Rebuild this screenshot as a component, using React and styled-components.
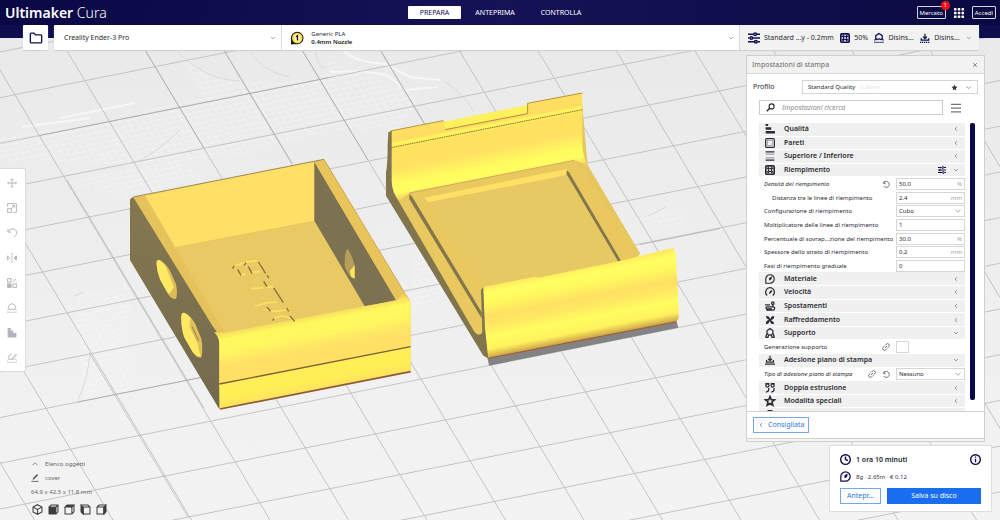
import React from "react";
import styled, { createGlobalStyle, css } from "styled-components";

const NAVY = "#0f0e4f";
const BLUE = "#196ef0";

const GlobalStyle = createGlobalStyle`
  *, *::before, *::after { box-sizing: border-box; }
  body {
    margin: 0;
    background: #eeeeee;
    color: #2b2b33;
    font: 7px/10px "Noto Sans", "Open Sans", sans-serif;
  }
  button, input, select {
    margin: 0;
    padding: 0;
    border: 0;
    border-radius: 0;
    background: none;
    color: inherit;
    font: inherit;
    letter-spacing: inherit;
  }
  button { cursor: pointer; }
  select { appearance: none; cursor: pointer; }
  svg { display: block; flex: none; }
`;

/* ---------- icons ---------- */

const ICONS = {
  folder: <path d="M1.500 3.500q0-1 1-1h3.200l1.800 2h6q1 0 1 1v7q0 1-1 1h-11q-1 0-1-1z" />,
  down: <path d="M3 5.500l5 5 5-5" />,
  up: <path d="M3 10.500l5-5 5 5" />,
  left: <path d="M10.500 3l-5 5 5 5" />,
  close: <path d="M3 3l10 10M13 3L3 13" />,
  sliders: (
    <g>
      <path d="M0 3h7M12 3h4M0 8h2M7 8h9M0 13h8M13 13h3" />
      <circle cx="9.500" cy="3" r="1.800" />
      <circle cx="4.500" cy="8" r="1.800" />
      <circle cx="10.500" cy="13" r="1.800" />
    </g>
  ),
  infill: (
    <g>
      <rect x="1" y="1" width="14" height="14" rx="2" fill="currentColor" />
      <g fill="#fff" stroke="none">
        <path d="M8 6L10 8 8 10 6 8z" />
        <path d="M5 2.600h6L8 5.200zM5 13.400h6L8 10.800zM2.600 5v6L5.200 8zM13.400 5v6L10.800 8z" />
        <circle cx="3.400" cy="3.400" r=".9" />
        <circle cx="12.600" cy="3.400" r=".9" />
        <circle cx="3.400" cy="12.600" r=".9" />
        <circle cx="12.600" cy="12.600" r=".9" />
      </g>
    </g>
  ),
  support: (
    <g>
      <path d="M5 11L2.800 8V4.200L8 .8l5.200 3.400V8L11 11" />
      <path d="M5 11Q8 8 11 11M3 9L.8 12M13 9l2.200 3" />
      <path d="M.5 14.800h15" strokeDasharray="2 1.200" />
    </g>
  ),
  supportSolid: (
    <g>
      <path d="M5.500 11L3 8l.5-4L8 1l4.500 3 .5 4-2.500 3" />
      <path d="M.5 14.800h4.200Q5 11 8 11t3.300 3.800h4.200M3 9.500L1 14.500M13 9.500l2 5" />
    </g>
  ),
  adhesion: (
    <g>
      <path d="M8 1v7.500M4.800 5.800L8 9l3.200-3.200" />
      <path d="M2 8.500v3h12v-3" />
      <path d="M0 14.800h16" strokeDasharray="2 1.200" />
    </g>
  ),
  adhesionSolid: (
    <g>
      <path d="M8 1v8M4.800 6L8 9l3.200-3" />
      <path d="M2.500 8v3.500h11V8M0 14.700h16" />
    </g>
  ),
  apps: (
    <g fill="currentColor" stroke="none">
      {[0, 6, 12].map((y) =>
        [0, 6, 12].map((x) => <rect key={`${x}-${y}`} x={x} y={y} width="4" height="4" rx="1" />)
      )}
    </g>
  ),
  search: (
    <g>
      <circle cx="10" cy="6" r="4.500" />
      <path d="M6.500 9.500L1.500 14.500" strokeWidth="2.600" />
    </g>
  ),
  menu: <path d="M0 2h16M0 8h16M0 14h16" />,
  star: <path fill="currentColor" d="M8 1.500l2 4.400 4.800.5-3.600 3.200 1 4.800L8 12l-4.200 2.400 1-4.800L1.200 6.400l4.800-.5z" />,
  starOutline: <path d="M8 1l2 4.800 5.200.4-4 3.400 1.300 5.100L8 12l-4.500 2.700 1.300-5.100-4-3.400L6 5.800z" strokeWidth="2.600" />,
  quality: <path fill="currentColor" stroke="none" d="M1 0h4v3H1zM1 5h9v4H1zM1 11h15v4H1z" />,
  walls: (
    <g>
      <rect x="1" y="1" width="14" height="14" rx="2" />
      <rect x="4" y="4" width="8" height="8" strokeWidth="1" opacity=".55" />
    </g>
  ),
  topBottom: (
    <g>
      <path d="M1 1.500h14M1 14.500h14" />
      <path d="M1 5h14M1 11h14" opacity=".4" />
    </g>
  ),
  material: (
    <g>
      <path d="M1.200 14.800V8A6.800 6.800 0 1 1 8 14.800z" strokeWidth="1.800" />
      <path d="M10.500 4.500L7 6.500v3.200l2.800-1z" fill="currentColor" strokeWidth="1" />
    </g>
  ),
  speed: (
    <g>
      <path d="M3.500 13.500a7 7 0 1 1 9 0" />
      <path d="M7 10.500L11 5.500" strokeWidth="2.600" />
    </g>
  ),
  travel: (
    <g>
      <path d="M0 6h8M2 14.500h11a2.500 2.500 0 0 0 0-5H3a1.500 1.500 0 0 0 0 3h8" />
      <circle cx="12.500" cy="3.500" r="2" />
      <path d="M12.500 5.500v4" />
    </g>
  ),
  fan: (
    <g fill="currentColor" stroke="none">
      <path d="M7 7Q2 7 1.500 1.500 7 1 8 6zM9 7q0-5.500 5.500-5.500Q15 7 10 8zM9 9q5 0 5.500 5.500Q9 15 8 10zM7 9q0 5.500-5.500 5.500Q1 9 6 8z" />
      <circle cx="8" cy="8" r="2.400" />
    </g>
  ),
  dual: (
    <g>
      <circle cx="3.800" cy="4" r="2.500" />
      <circle cx="12.200" cy="4" r="2.500" />
      <path d="M.5 1h6.500M9 1h6.500M6 8v2.500q0 3.500-4.500 4M14.500 8v2.500q0 3.500-4.500 4" />
    </g>
  ),
  experimental: <path fill="currentColor" d="M5 1h6v6l4 8H1l4-8z" />,
  reset: (
    <g>
      <path d="M3 6.500A6 6 0 1 1 3.500 12" />
      <path d="M6.500 2L2.500 6.200l5 1.800" />
    </g>
  ),
  link: (
    <g transform="rotate(-45 8 8)">
      <path d="M7 11.500H3.500a3.500 3.500 0 0 1 0-7H7M9 4.500h3.500a3.500 3.500 0 0 1 0 7H9M5 8h6" />
    </g>
  ),
  clock: (
    <g>
      <circle cx="8" cy="8" r="7" />
      <path d="M8 3.500V8l3.500 1.500" />
    </g>
  ),
  info: (
    <g>
      <circle cx="8" cy="8" r="7" />
      <path d="M8 7v5M8 3.800v1.600" />
    </g>
  ),
  pencil: (
    <g>
      <path d="M4 11l1-3 7-7 1.500 1.500-7 7z" fill="currentColor" strokeWidth="1" />
      <path d="M1 14.800h14" />
    </g>
  ),
  move: <path d="M8 1v14M1 8h14M6 3l2-2 2 2M6 13l2 2 2-2M3 6L1 8l2 2M13 6l2 2-2 2" />,
  scale: (
    <g>
      <path d="M1 6V1h14v14h-5" />
      <rect x="1" y="9" width="6" height="6" />
      <path d="M8 8l4-4M8.500 4H12v3.500" />
    </g>
  ),
  rotate: (
    <g>
      <path d="M3 5.500A6.500 6.500 0 1 1 11 14" />
      <path d="M1.500 1.500v5h5" />
    </g>
  ),
  mirror: (
    <g>
      <path d="M8 0v16" strokeDasharray="4 1" />
      <path d="M1 4.500v7L4.500 8z" />
      <path d="M15 4.500v7L11.500 8z" fill="currentColor" />
    </g>
  ),
  mesh: (
    <g>
      <rect x="1" y="1" width="5.500" height="5.500" />
      <rect x="1" y="9.500" width="5.500" height="5.500" fill="currentColor" />
      <rect x="9.500" y="9.500" width="5.500" height="5.500" />
      <path d="M9.500 6.500l5-5M9.500 2h1M14 6.500h1" />
    </g>
  ),
  blocker: <path fill="currentColor" stroke="none" d="M1 0h5v4h4v4h5v7H1z" />,
  paint: (
    <g>
      <path d="M5 11L2.800 8V4.500L8 1.500M8 9l6-7 1.500 1.500-6.500 6z" />
      <path d="M5 11Q8 8.500 11 11M3 9L.8 12M13 9l2.200 3" />
      <path d="M.5 14.800h15" strokeDasharray="2 1.200" />
    </g>
  ),
  cube: <path d="M8 1l6.500 3.500v7L8 15l-6.500-3.500v-7zM1.500 4.500L8 8l6.500-3.500M8 8v7" />,
  cubeFront: (
    <g>
      <path d="M1.500 4.500l3-3h10v10l-3 3M11.500 4.500l3-3" />
      <rect x="1.500" y="4.500" width="10" height="10" fill="currentColor" />
    </g>
  ),
  cubeTop: (
    <g>
      <path d="M1.500 4.500l3-3h10l-3 3z" fill="currentColor" />
      <path d="M1.500 4.500v10h10v-10M11.500 14.500l3-3v-10" />
    </g>
  ),
  cubeLeft: (
    <g>
      <path d="M1.500 1.500l3 3v10l-3-3z" fill="currentColor" />
      <path d="M4.500 4.500h10v10h-10zM1.500 1.500h10l3 3" />
    </g>
  ),
  cubeRight: (
    <g>
      <path d="M11.500 4.500l3-3v10l-3 3z" fill="currentColor" />
      <path d="M1.500 4.500h10v10h-10zM1.500 4.500l3-3h10" />
    </g>
  ),
};

const IconSvg = styled.svg`
  width: ${(p) => p.$size}px;
  height: ${(p) => p.$size}px;
  color: ${(p) => p.$color || "inherit"};
  fill: none;
  stroke: currentColor;
  stroke-width: ${(p) => p.$stroke};
  overflow: visible;
`;

const Icon = ({ name, size = 10, color, stroke = 2 }) => (
  <IconSvg viewBox="0 0 16 16" $size={size} $color={color} $stroke={stroke} aria-hidden="true">
    {ICONS[name]}
  </IconSvg>
);

/* ---------- 3D scene ---------- */

const SceneSvg = styled.svg`
  position: absolute;
  inset: 0;
  width: 100%;
  height: 100%;
`;

const steep = Array.from({ length: 18 }, (_, i) => -326 + i * 78.5);
const shallow = Array.from({ length: 16 }, (_, i) => 52 + i * 45.7);

const Scene = () => (
  <SceneSvg viewBox="0 0 1000 520" preserveAspectRatio="xMidYMin slice" role="img" aria-label="Piano di stampa">
    <defs>
      <linearGradient id="plate" x1="0" y1="0" x2="0" y2="1">
        <stop offset="0" stopColor="#e9e9e9" />
        <stop offset="1" stopColor="#f3f3f3" />
      </linearGradient>
      <pattern id="mesh" width="7" height="5" patternUnits="userSpaceOnUse" patternTransform="matrix(1 -.2 .6 1 0 0)">
        <path d="M0 0H7M0 0V5" stroke="#fff" strokeWidth="1" opacity=".5" />
      </pattern>
      <linearGradient id="boxFront" gradientUnits="userSpaceOnUse" x1="560" y1="490" x2="589" y2="640">
        <stop offset="0" stopColor="#f2d05c" />
        <stop offset=".2" stopColor="#fff95e" />
        <stop offset=".42" stopColor="#fff760" />
        <stop offset=".7" stopColor="#ffe365" />
        <stop offset="1" stopColor="#ffdf64" />
      </linearGradient>
      <linearGradient id="boxLower" gradientUnits="userSpaceOnUse" x1="580" y1="650" x2="594" y2="722">
        <stop offset="0" stopColor="#ffee58" />
        <stop offset=".5" stopColor="#fff054" />
        <stop offset="1" stopColor="#ffe060" />
      </linearGradient>
      <linearGradient id="boxSide" x1="0" y1="0" x2="0" y2="1">
        <stop offset="0" stopColor="#857850" />
        <stop offset="1" stopColor="#736a4e" />
      </linearGradient>
      <linearGradient id="lidBack" gradientUnits="userSpaceOnUse" x1="310" y1="85" x2="350" y2="292">
        <stop offset="0" stopColor="#ffe060" />
        <stop offset=".16" stopColor="#ffdc62" />
        <stop offset=".2" stopColor="#fff65c" />
        <stop offset=".28" stopColor="#ffe160" />
        <stop offset=".55" stopColor="#ffe263" />
        <stop offset=".76" stopColor="#fffb5e" />
        <stop offset=".88" stopColor="#ffff62" />
        <stop offset="1" stopColor="#f2d260" />
      </linearGradient>
      <linearGradient id="lidFront" gradientUnits="userSpaceOnUse" x1="600" y1="550" x2="642" y2="765">
        <stop offset="0" stopColor="#ffe95e" />
        <stop offset=".1" stopColor="#ffff62" />
        <stop offset=".24" stopColor="#fff95e" />
        <stop offset=".42" stopColor="#ffe063" />
        <stop offset=".55" stopColor="#ffe962" />
        <stop offset=".7" stopColor="#fffd60" />
        <stop offset=".86" stopColor="#fff25e" />
        <stop offset=".96" stopColor="#d5b04b" />
        <stop offset="1" stopColor="#8d7440" />
      </linearGradient>
    </defs>

    <rect width="1000" height="520" fill="url(#plate)" />

    <g fill="url(#mesh)">
      <path d="M178 52Q205 80 245 82L318 79 330 60 420 95 400 130 330 130 240 155 140 165 0 160V135L110 122 200 95z" />
      <path d="M68 182L180 160 200 175 130 200z" />
      <path d="M75 300L130 282V390L85 395z" />
      <path d="M415 235L470 240 440 300 410 320z" />
      <path d="M640 215L690 205 685 225 650 235z" />
    </g>
    <g fill="none" stroke="#dadada">
      <path d="M178 52Q205 80 240 81M251 52Q262 72 290 77M316 52Q316 65 326 69M180 130Q160 150 135 163M444 81Q465 95 474 112M90 352Q88 380 78 400M75 296l8-4M648 216l18-9" />
    </g>
    <g fill="none" stroke="#f6f6f6" strokeWidth="2">
      <path d="M344 51Q355 62 385 64L410 77 440 80M330 72Q375 70 390 77L405 90 438 87M22 127L90 118M60 118L135 103" />
    </g>

    <g fill="none" stroke="#c4c4c4">
      {steep.map((x) => (
        <path key={x} d={`M${x - 30} 0L${x + 282} 520`} />
      ))}
      {shallow.map((y) => (
        <path key={y} d={`M0 ${y}L1000 ${y - 200}`} />
      ))}
    </g>
    <g fill="none" stroke="#8c8c8c" opacity=".4">
      <path d="M67 180L204 408M145 50L204 148M224 50L292 163M302 50L368 160M380 50L425 125M90 354L188 517M40 135.400L330 77.400M78 402L204 376.900M640 244.600L720 228.600" />
    </g>

    {/* open box */}
    <g transform="translate(120 150) scale(.3333)">
      <path d="M30 150Q32 142 40 142L612 28 855 430Q872 445 872 470V665L300 778 30 330z" fill="#e7c660" />
      <path d="M75 137L583 35V212L165 292z" fill="#ffe066" />
      <path d="M165 292L583 212 735 472 318 556z" fill="#e8c963" />
      <path d="M40 142L75 137 165 292 318 556 285 545z" fill="#e5c25b" />
      <path d="M583 35L828 450 735 470 583 212z" fill="#7c7150" />
      <path d="M583 35L612 28 855 432 828 450z" fill="#e9c45a" />
      <path d="M674 348Q673 305 683 296 697 318 704 346V386L693 380Q680 368 674 348z" fill="#b79e5a" />
      <path d="M690 362L704 346V386L693 380z" fill="#ffe75c" />
      <path d="M30 150Q32 142 40 142L280 532Q298 552 298 580V778L30 330z" fill="url(#boxSide)" />
      <path d="M282 546L318 548 735 468 828 452 850 432Q872 445 872 470V590L298 702V580Q296 558 282 546z" fill="url(#boxFront)" />
      <path d="M298 702L872 590V665L300 778z" fill="url(#boxLower)" />
      <path d="M298 702L872 590" fill="none" stroke="#7d6236" strokeWidth="4" />
      <path d="M300 777L872 665" fill="none" stroke="#8d5b35" strokeWidth="5" />
      <path d="M40 141L612 28" fill="none" stroke="#a08a4d" strokeWidth="3" />
      <path d="M612 28L855 430" fill="none" stroke="#b99a4c" strokeWidth="2" />
      <g>
        <path d="M110 345Q108 326 120 331 138 341 150 362L168 402Q174 430 168 446 156 450 144 432L120 388Q112 368 110 345z" fill="#dcbc58" />
        <path d="M110 345Q108 326 120 331 130 337 138 350L150 382 162 412 150 430Q146 434 140 424L120 388Q112 368 110 345z" fill="#ffe962" />
        <path d="M184 508Q182 486 194 489 212 496 226 522L244 566Q250 600 244 622 232 626 218 606L194 564Q184 540 184 508z" fill="#dfbf59" />
        <path d="M184 508Q182 486 194 489 206 494 212 506L208 528 232 580 242 620Q230 622 218 606L194 564Q184 540 184 508z" fill="#ffe962" />
        <path d="M216 530L236 572" stroke="#8c7a4c" strokeWidth="3" fill="none" />
      </g>
      <g fill="none">
        <path
          d="M348 346L375 338M378 336L412 332M355 376L377 372M392 368L420 364M394 416L430 413M438 412L460 410M405 468L445 458 474 456M436 478L456 484 505 480M462 506Q486 490 515 506"
          stroke="#ffe067"
          strokeWidth="5"
        />
        <path
          d="M338 356L342 348M353 358L363 376M385 350L396 370M372 346L378 338M415 336L437 370M441 376L447 384M431 394L441 410M461 414L490 458M441 472L452 484M500 474L506 484M510 498L524 514M458 512L462 506"
          stroke="#86703f"
          strokeWidth="4"
        />
      </g>
    </g>

    {/* sliding lid */}
    <g transform="translate(375 85) scale(.3333)">
      <path d="M338 818L905 708 910 728 342 842z" fill="#838384" />
      <path d="M45 138L622 60 638 240 795 505 735 600 340 800 300 760 60 360z" fill="#e7c65f" />
      <path d="M48 138L205 107 212 110 458 62V55L622 24V180Q624 215 638 242L598 226 105 322V345L75 350Q52 320 50 290z" fill="url(#lidBack)" />
      <path d="M208 110L458 60V84L208 134z" fill="#fff15c" />
      <path d="M210 134L458 86V55" fill="none" stroke="#b08e3e" strokeWidth="3" />
      <path d="M48 188L622 74" fill="none" stroke="#8b753b" strokeWidth="3" strokeDasharray="5 2" />
      <path d="M46 138L205 107M458 55L622 24" fill="none" stroke="#b89240" strokeWidth="3" />
      <path d="M103 324L598 226 795 505 735 530 325 606V745Q312 758 298 740L72 348z" fill="#e9c860" />
      <path d="M148 338L575 252 578 270 160 352z" fill="#ffe064" />
      <path d="M160 352L578 270 735 530 325 606z" fill="#e7c963" />
      <path d="M103 326L112 336 320 682V700L103 342z" fill="#83764b" />
      <path d="M575 256L582 262 737 526 730 530 575 268z" fill="#83764b" />
      <path d="M103 324L598 226" fill="none" stroke="#c5a24e" strokeWidth="2" />
      <path d="M40 142L50 138V290Q52 325 72 350L298 740Q312 758 322 742L318 615 326 604 330 700 340 820 325 812 33 332V262Q38 240 38 180z" fill="#80754d" />
      <path d="M325 606L480 575 490 578 735 528 895 488Q903 500 903 515L912 690Q912 704 902 710L340 820 330 730z" fill="url(#lidFront)" />
      <path d="M340 820L902 711" fill="none" stroke="#a3563a" strokeWidth="3" />
    </g>
  </SceneSvg>
);

/* ---------- page frame ---------- */

const Page = styled.div`
  position: relative;
  display: flex;
  flex-direction: column;
  min-height: 100vh;
  overflow: hidden;
`;

const Header = styled.header`
  position: relative;
  display: grid;
  grid-template-columns: 1fr auto 1fr;
  align-items: center;
  height: 25px;
  padding: 0 4px 0 5px;
  background: linear-gradient(100deg, #090845, #151356 50%, #0a0a42);
  color: #fff;
`;

const Logo = styled.h1`
  margin: 0;
  font-size: 14px;
  line-height: 20px;
  font-weight: 600;
`;

const LogoLight = styled.span`
  font-weight: 300;
`;

const Tabs = styled.nav`
  display: flex;
  gap: 2px;
`;

const Tab = styled.button`
  height: 13px;
  padding: 0 12px;
  border-radius: 1px;
  ${(p) =>
    p.$active &&
    css`
      background: #fff;
      color: ${NAVY};
    `}
`;

const HeaderActions = styled.div`
  display: flex;
  align-items: center;
  justify-content: flex-end;
  gap: 8px;
`;

const OutlineButton = styled.button`
  position: relative;
  height: 13px;
  padding: 0 2px;
  border: 1px solid #d5d5e6;
  border-radius: 1px;
  font-size: 6px;
  line-height: 10px;
`;

const Badge = styled.span`
  position: absolute;
  top: -6px;
  right: -5px;
  width: 9px;
  height: 9px;
  border-radius: 50%;
  background: #f01018;
  font-size: 6px;
  line-height: 9px;
  text-align: center;
`;

const ConfigRow = styled.div`
  position: relative;
  display: flex;
  gap: 6px;
  height: 25px;
  padding: 0 21px 0 23px;
  background: linear-gradient(${NAVY}, ${NAVY}) top / 100% 13px no-repeat;
`;

const FolderButton = styled.button`
  display: grid;
  place-items: center;
  width: 25px;
  background: #fff;
  border-radius: 1px;
  box-shadow: 0 1px 1px #cfcfcf;
`;

const ConfigBar = styled.div`
  flex: 1;
  display: grid;
  grid-template-columns: 1fr 2fr 240px;
  background: #fff;
  border-radius: 1px;
  box-shadow: 0 1px 1px #cfcfcf;
`;

const PrinterField = styled.label`
  display: flex;
  align-items: center;
  padding: 0 5px 0 10px;
  border-right: 1px solid #d8d8d8;
`;

const PlainSelect = styled.select`
  flex: ${(p) => (p.$width ? "none" : 1)};
  width: ${(p) => (p.$width ? `${p.$width}px` : "auto")};
  min-width: 0;
  height: 10px;
`;

const MaterialButton = styled.button`
  display: flex;
  align-items: center;
  gap: 7px;
  padding: 0 5px 0 8px;
  font-size: 6px;
  line-height: 8px;
  text-align: left;
`;

const MaterialText = styled.span`
  flex: 1;
  display: grid;
`;

const Strong = styled.strong`
  color: #191919;
  font-weight: 600;
`;

const SettingsSummary = styled.button`
  display: flex;
  align-items: center;
  justify-content: space-between;
  padding: 0 7px 0 8px;
  background: #f2f2f2;
  border-left: 1px solid #d8d8d8;
`;

const SummaryItem = styled.span`
  display: flex;
  align-items: center;
  gap: 4px;
  white-space: nowrap;
`;

const Main = styled.main`
  position: relative;
  flex: 1;
  display: flex;
  justify-content: space-between;
`;

const LeftColumn = styled.div`
  display: flex;
  flex-direction: column;
  align-items: flex-start;
  justify-content: space-between;
  padding: 119px 0 4px;
`;

const Toolbar = styled.div`
  display: grid;
  grid-auto-rows: 25px;
  width: 25px;
  padding: 1px 2px 1px 0;
  background: #fff;
  border-radius: 0 2px 2px 0;
  box-shadow: 0 0 1px 1px #dcdcdc;
  color: #b4b4bc;
`;

const ToolButton = styled.button`
  display: grid;
  place-items: center;
`;

const Objects = styled.section`
  display: grid;
  gap: 4px;
  padding-left: 31px;
  color: #666;
  font-size: 6px;
`;

const ObjectLine = styled.button`
  display: flex;
  align-items: center;
  gap: 6px;
  text-align: left;
`;

const Dimensions = styled.p`
  margin: 0;
`;

const Views = styled.div`
  display: flex;
  gap: 5px;
  padding: 3px 1px 1px;
  color: #3c3c3c;
`;

const RightColumn = styled.div`
  display: flex;
  flex-direction: column;
  align-items: flex-end;
  gap: 3px;
  padding: 5px 8px 8px 0;
`;

/* ---------- print settings panel ---------- */

const Panel = styled.section`
  width: 239px;
  margin-right: 7px;
  background: #fff;
  border: 1px solid #cfcfcf;
`;

const PanelHeader = styled.header`
  display: flex;
  align-items: center;
  justify-content: space-between;
  height: 18px;
  padding: 0 6px 0 5px;
  background: #f2f2f2;
  border-bottom: 1px solid #d6d6d6;
  color: #6a6a6a;
`;

const PanelTitle = styled.h2`
  margin: 0;
  font: inherit;
`;

const IconButton = styled.button`
  display: grid;
  place-items: center;
`;

const ProfileRow = styled.div`
  display: flex;
  align-items: center;
  justify-content: space-between;
  padding: 6px;
`;

const ProfileBox = styled.div`
  display: flex;
  align-items: center;
  width: 176px;
  height: 14px;
  padding: 0 5px;
  border: 1px solid #d4d4d4;
  font-size: 6px;
`;

const Faint = styled.span`
  flex: 1;
  color: #e4e4e4;
`;

const IconPair = styled.span`
  display: flex;
  align-items: center;
  gap: 7px;
`;

const SearchRow = styled.div`
  display: flex;
  align-items: center;
  gap: 8px;
  padding: 0 12px 8px;
`;

const SearchBox = styled.label`
  display: flex;
  align-items: center;
  gap: 7px;
  width: 184px;
  height: 15px;
  padding: 0 6px;
  border: 1px solid #cccccc;
`;

const SearchInput = styled.input`
  flex: 1;
  min-width: 0;
  outline: 0;
  font-style: italic;
  &::placeholder { color: #8a8a8a; opacity: 1; }
`;

const ListArea = styled.div`
  display: flex;
  gap: 5px;
  height: 288px;
  padding: 0 9px 0 12px;
  overflow: hidden;
`;

const SettingsList = styled.div`
  flex: 1;
  display: grid;
  grid-template-columns: minmax(0, 1fr);
  grid-template-rows: repeat(22, 1fr);
  min-width: 0;
  height: 299px;
`;

const ScrollThumb = styled.div`
  flex: none;
  width: 5px;
  height: 277px;
  border-radius: 2px;
  background: #08084f;
`;

const CategoryButton = styled.button`
  display: flex;
  align-items: center;
  gap: 9px;
  margin-bottom: 1px;
  padding: 0 6px;
  background: #f0f0f0;
  text-align: left;
`;

const CategoryName = styled.span`
  flex: 1;
  font-weight: 600;
`;

const SettingRow = styled.div`
  display: flex;
  align-items: center;
  gap: 2px;
  padding-left: ${(p) => (p.$indent ? 13 : 5)}px;
  font-size: 6px;
`;

const SettingLabel = styled.label`
  flex: 1;
  white-space: nowrap;
  font-style: ${(p) => (p.$changed ? "italic" : "normal")};
`;

const SettingIcons = styled.span`
  display: flex;
  gap: 6px;
  padding-right: 4px;
`;

const Field = styled.span`
  display: flex;
  flex: none;
  align-items: center;
  width: 69px;
  height: 12px;
  padding: 0 2px;
  background: #fff;
  border: 1px solid #d6d6d6;
`;

const FieldInput = styled.input`
  flex: 1;
  min-width: 0;
  height: 10px;
  outline: 0;
`;

const Unit = styled.span`
  color: #a3a3a3;
`;

const CheckSlot = styled.span`
  display: flex;
  flex: none;
  width: 69px;
`;

const Checkbox = styled.input`
  appearance: none;
  width: 13px;
  height: 12px;
  border: 1px solid #d6d6d6;
  background: #fff;
`;

const PanelFooter = styled.footer`
  padding: 5px 6px;
  border-top: 1px solid #d0d0d0;
`;

const PanelGrip = styled.div`
  height: 3px;
  border-top: 1px solid #d0d0d0;
  background: #f5f5f5;
`;

const ActionButton = styled.button`
  display: flex;
  align-items: center;
  justify-content: center;
  gap: 4px;
  height: 16px;
  padding: 0 4px;
  border: 1px solid ${(p) => (p.$primary ? BLUE : "#74a7ee")};
  background: ${(p) => (p.$primary ? BLUE : "#fff")};
  color: ${(p) => (p.$primary ? "#fff" : "#2f76dd")};
`;

/* ---------- job card ---------- */

const JobCard = styled.section`
  display: grid;
  gap: 6px;
  width: 163px;
  padding: 8px 10px 7px;
  background: #fff;
  border: 1px solid #dedede;
`;

const JobLine = styled.div`
  display: flex;
  align-items: center;
  gap: 5px;
  height: 11px;
  color: ${NAVY};
`;

const JobTime = styled.span`
  flex: 1;
  color: #222230;
  font-weight: 600;
`;

const JobMaterial = styled.span`
  color: #33333c;
  font-size: 6px;
`;

const JobButtons = styled.div`
  display: grid;
  grid-template-columns: 41px 1fr;
  gap: 6px;
`;

/* ---------- composed parts ---------- */

const Category = ({ icon, children, label, open, extra }) => (
  <CategoryButton aria-expanded={!!open} aria-label={label}>
    <Icon name={icon} />
    <CategoryName>{children}</CategoryName>
    <IconPair>
      {extra && <Icon name="sliders" size={8} color={NAVY} />}
      <Icon name={open ? "down" : "left"} size={6} color="#777" />
    </IconPair>
  </CategoryButton>
);

const Setting = ({ id, label, value, unit, options, checkbox, changed, indent, icons }) => (
  <SettingRow $indent={indent}>
    <SettingLabel htmlFor={id} $changed={changed}>
      {label}
    </SettingLabel>
    {icons && (
      <SettingIcons>
        {icons.map((name) => (
          <IconButton key={name} aria-label={name === "link" ? "Collegato" : "Ripristina"}>
            <Icon name={name} size={8} color="#666" stroke={1.8} />
          </IconButton>
        ))}
      </SettingIcons>
    )}
    {checkbox && (
      <CheckSlot>
        <Checkbox id={id} type="checkbox" />
      </CheckSlot>
    )}
    {options && (
      <Field>
        <PlainSelect id={id} defaultValue={options[0]}>
          {options.map((o) => (
            <option key={o}>{o}</option>
          ))}
        </PlainSelect>
        <Icon name="down" size={8} color="#888" stroke={1.5} />
      </Field>
    )}
    {value && (
      <Field>
        <FieldInput id={id} defaultValue={value} />
        {unit && <Unit>{unit}</Unit>}
      </Field>
    )}
  </SettingRow>
);

const SpoolBadge = () => (
  <svg width="14" height="14" viewBox="0 0 28 28" aria-hidden="true">
    <path d="M2 27V14A12.500 12.500 0 1 1 14 26.500H7z" fill="#1c1c10" />
    <circle cx="14.500" cy="14" r="10.500" fill="#ffe04a" />
    <circle cx="14.500" cy="14" r="6.500" fill="#fff6c8" />
    <path d="M12 11.500l3-2v9.500" fill="none" stroke="#111" strokeWidth="2.600" />
  </svg>
);

const TOOLS = [
  ["move", "Sposta"],
  ["scale", "Scala"],
  ["rotate", "Ruota"],
  ["mirror", "Immagine speculare"],
  ["mesh", "Impostazioni per modello"],
  ["support", "Supporto"],
  ["blocker", "Blocco supporto"],
  ["paint", "Supporto personalizzato"],
];

const VIEWS = [
  ["cube", "Vista 3D"],
  ["cubeFront", "Vista frontale"],
  ["cubeTop", "Vista superiore"],
  ["cubeLeft", "Vista sinistra"],
  ["cubeRight", "Vista destra"],
];

export default function App() {
  return (
    <Page>
      <GlobalStyle />
      <Scene />

      <Header>
        <Logo>
          Ultimaker <LogoLight>Cura</LogoLight>
        </Logo>
        <Tabs>
          <Tab $active>PREPARA</Tab>
          <Tab>ANTEPRIMA</Tab>
          <Tab>CONTROLLA</Tab>
        </Tabs>
        <HeaderActions>
          <OutlineButton>
            Mercato<Badge>1</Badge>
          </OutlineButton>
          <IconButton aria-label="Applicazioni">
            <Icon name="apps" />
          </IconButton>
          <OutlineButton>Accedi</OutlineButton>
        </HeaderActions>
      </Header>

      <ConfigRow>
        <FolderButton aria-label="Apri file">
          <Icon name="folder" size={14} color={NAVY} stroke={1.5} />
        </FolderButton>
        <ConfigBar>
          <PrinterField>
            <PlainSelect aria-label="Stampante" defaultValue="Creality Ender-3 Pro">
              <option>Creality Ender-3 Pro</option>
            </PlainSelect>
            <Icon name="down" size={6} color="#888" />
          </PrinterField>
          <MaterialButton>
            <SpoolBadge />
            <MaterialText>
              <span>Generic PLA</span>
              <Strong>0.4mm Nozzle</Strong>
            </MaterialText>
            <Icon name="down" size={6} color="#888" />
          </MaterialButton>
          <SettingsSummary>
            <SummaryItem>
              <Icon name="sliders" size={12} color={NAVY} />
              Standard ...y - 0.2mm
            </SummaryItem>
            <SummaryItem>
              <Icon name="infill" color={NAVY} />
              50%
            </SummaryItem>
            <SummaryItem>
              <Icon name="support" color={NAVY} />
              Disins...
            </SummaryItem>
            <SummaryItem>
              <Icon name="adhesion" color={NAVY} />
              Disins...
            </SummaryItem>
            <Icon name="down" size={6} color="#888" />
          </SettingsSummary>
        </ConfigBar>
      </ConfigRow>

      <Main>
        <LeftColumn>
          <Toolbar>
            {TOOLS.map(([name, label]) => (
              <ToolButton key={name} aria-label={label}>
                <Icon name={name} stroke={1.5} />
              </ToolButton>
            ))}
          </Toolbar>
          <Objects>
            <ObjectLine>
              <Icon name="up" size={8} stroke={1.5} />
              Elenco oggetti
            </ObjectLine>
            <ObjectLine>
              <Icon name="pencil" size={8} color="#444" stroke={1.5} />
              cover
            </ObjectLine>
            <Dimensions>64.9 x 42.5 x 11.8 mm</Dimensions>
            <Views>
              {VIEWS.map(([name, label]) => (
                <IconButton key={name} aria-label={label}>
                  <Icon name={name} size={11} stroke={1.5} />
                </IconButton>
              ))}
            </Views>
          </Objects>
        </LeftColumn>

        <RightColumn>
          <Panel>
            <PanelHeader>
              <PanelTitle>Impostazioni di stampa</PanelTitle>
              <IconButton aria-label="Chiudi">
                <Icon name="close" size={6} />
              </IconButton>
            </PanelHeader>
            <ProfileRow>
              <label htmlFor="profile">Profilo</label>
              <ProfileBox>
                <PlainSelect id="profile" $width={52} defaultValue="Standard Quality">
                  <option>Standard Quality</option>
                </PlainSelect>
                <Faint>0.2mm</Faint>
                <IconPair>
                  <Icon name="star" size={7} color="#333" stroke={0} />
                  <Icon name="down" size={7} color="#888" />
                </IconPair>
              </ProfileBox>
            </ProfileRow>
            <SearchRow>
              <SearchBox>
                <Icon name="search" size={9} />
                <SearchInput placeholder="Impostazioni ricerca" aria-label="Impostazioni ricerca" />
              </SearchBox>
              <IconButton aria-label="Visibilità impostazioni">
                <Icon name="menu" color="#777" />
              </IconButton>
            </SearchRow>
            <ListArea>
              <SettingsList>
                <Category icon="quality">Qualità</Category>
                <Category icon="walls">Pareti</Category>
                <Category icon="topBottom">Superiore / Inferiore</Category>
                <Category icon="infill" open extra>
                  Riempimento
                </Category>
                <Setting id="density" label="Densità del riempimento" value="50.0" unit="%" changed icons={["reset"]} />
                <Setting id="distance" label="Distanza tra le linee di riempimento" value="2.4" unit="mm" indent />
                <Setting id="pattern" label="Configurazione di riempimento" options={["Cubo", "Griglia", "Linee"]} />
                <Setting id="multiplier" label="Moltiplicatore delle linee di riempimento" value="1" />
                <Setting id="overlap" label="Percentuale di sovrap...zione del riempimento" value="30.0" unit="%" />
                <Setting id="thickness" label="Spessore dello strato di riempimento" value="0.2" unit="mm" />
                <Setting id="steps" label="Fasi di riempimento graduale" value="0" />
                <Category icon="material">Materiale</Category>
                <Category icon="speed">Velocità</Category>
                <Category icon="travel">Spostamenti</Category>
                <Category icon="fan">Raffreddamento</Category>
                <Category icon="supportSolid" open>
                  Supporto
                </Category>
                <Setting id="support" label="Generazione supporto" checkbox icons={["link"]} />
                <Category icon="adhesionSolid" open>
                  Adesione piano di stampa
                </Category>
                <Setting
                  id="adhesion"
                  label="Tipo di adesione piano di stampa"
                  options={["Nessuno", "Skirt", "Brim", "Raft"]}
                  changed
                  icons={["link", "reset"]}
                />
                <Category icon="dual">Doppia estrusione</Category>
                <Category icon="starOutline">Modalità speciali</Category>
                <Category icon="experimental" label="Sperimentale" />
              </SettingsList>
              <ScrollThumb />
            </ListArea>
            <PanelFooter>
              <ActionButton>
                <Icon name="left" size={6} />
                Consigliata
              </ActionButton>
            </PanelFooter>
            <PanelGrip />
          </Panel>

          <JobCard>
            <JobLine>
              <Icon name="clock" size={11} />
              <JobTime>1 ora 10 minuti</JobTime>
              <Icon name="info" size={11} />
            </JobLine>
            <JobLine>
              <Icon name="material" size={11} />
              <JobMaterial>8g · 2.65m · € 0.12</JobMaterial>
            </JobLine>
            <JobButtons>
              <ActionButton>Antepr...</ActionButton>
              <ActionButton $primary>Salva su disco</ActionButton>
            </JobButtons>
          </JobCard>
        </RightColumn>
      </Main>
    </Page>
  );
}
